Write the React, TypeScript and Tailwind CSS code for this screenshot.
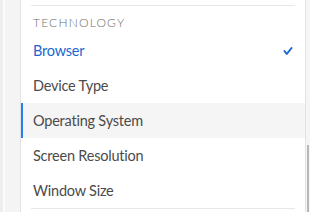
const items = ["Browser", "Device Type", "Operating System", "Screen Resolution", "Window Size"];

function Check() {
  return (
    <svg viewBox="0 0 10 10" className="w-[10px] h-[10px] fill-[#1a68cf]">
      <path d="M3.788 9A.999.999 0 0 1 3 8.615l-2.288-3a1 1 0 1 1 1.576-1.23l1.5 1.991 3.924-4.991a1 1 0 1 1 1.576 1.23l-4.712 6A.999.999 0 0 1 3.788 9z" />
    </svg>
  );
}

export default function App() {
  return (
    <div
      className="flex h-[212px] w-[310px] overflow-hidden bg-[#f5f5f5]"
      style={{ fontFamily: "Lato, 'Open Sans', sans-serif" }}
    >
      {/* left rail */}
      <div className="flex w-[21px] shrink-0 border-r border-[#e3e3e3]">
        <div className="w-[3px] bg-[#eeeeee]" />
        <div className="w-[2px] bg-[#fbfbfb]" />
        <div className="flex-1 bg-[#f4f4f4]" />
      </div>

      {/* menu panel */}
      <div className="flex w-[284px] shrink-0 flex-col bg-white pt-[5px]">
        <div className="mx-[10px] h-px bg-[#e8e8e8]" />
        <div className="h-[27px] pl-[12px] pt-[9px] text-[12px] font-light leading-[15px] tracking-[0.1em] text-[#6e6e6e]">
          TECHNOLOGY
        </div>
        {items.map((label, i) => {
          const selected = i === 0;
          const focused = i === 2;
          return (
            <div
              key={label}
              className={`flex h-[35px] shrink-0 items-center justify-between border-l-2 pl-[10px] pr-[12px] text-[14.5px] tracking-[-0.015em] ${
                focused ? "border-[#2680eb] bg-[#f5f5f5]" : "border-transparent"
              } ${selected ? "text-[#1a68cf]" : "text-[#4b4b4b]"}`}
            >
              <span>{label}</span>
              {selected && <Check />}
            </div>
          );
        })}
        <div className="mx-[10px] h-px bg-[#e8e8e8]" />
      </div>

      {/* right edge + scrollbar */}
      <div className="flex flex-1 border-l border-[#e3e3e3]">
        <div className="flex-1" />
        <div className="mr-[1px] flex w-[2px] flex-col pt-[145px]">
          <div className="flex-1 bg-[#b8b8b8]" />
        </div>
      </div>
    </div>
  );
}
